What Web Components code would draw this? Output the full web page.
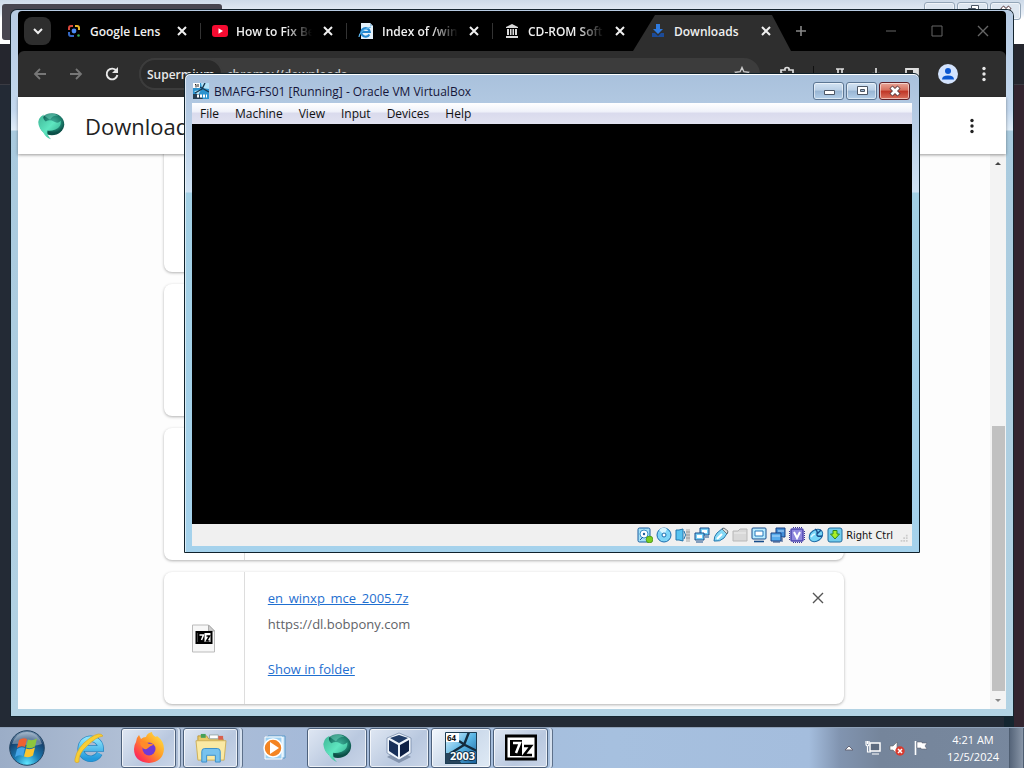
<!DOCTYPE html>
<html lang="en">
<head>
<meta charset="utf-8">
<meta name="viewport" content="width=device-width, initial-scale=1">
<title>Desktop</title>
<style>
  html, body { height: 100%; margin: 0; }
  body { font-family: "Open Sans", "Noto Sans", sans-serif; font-size: 12px; overflow: hidden; }
</style>
</head>
<body>
<desk-top>
  <back-window slot="back"></back-window>
  <browser-window slot="browser"></browser-window>
  <vm-window slot="vm" heading="BMAFG-FS01 [Running] - Oracle VM VirtualBox"></vm-window>
  <task-bar slot="taskbar"></task-bar>
</desk-top>

<script>
const ICONS = {
  chevron: '<path d="M4 6l4 4 4-4" fill="none" stroke="#eee" stroke-width="2"/>',
  close: '<path d="M4 4l8 8M12 4l-8 8" fill="none" stroke="currentColor" stroke-width="2"/>',
  thinclose: '<path d="M3 3l10 10M13 3L3 13" fill="none" stroke="currentColor" stroke-width="1.4"/>',
  min: '<path d="M3 8h10" stroke="currentColor"/>',
  max: '<path d="M3 3h10v10H3z" fill="none" stroke="currentColor"/>',
  plus: '<path d="M8 3v10M3 8h10" stroke="currentColor" stroke-width="1.6"/>',
  lens: '<g fill="none" stroke-width="2"><path d="M3 7V5q0-2 2-2h2" stroke="#d8483c"/><path d="M9 3h2q2 0 2 2v2" stroke="#e8b62a"/><path d="M3 9v2q0 2 2 2h3" stroke="#3569c4"/></g><circle cx="8" cy="8" r="2.4" fill="#4c8bf5"/><circle cx="12.5" cy="12.5" r="1.3" fill="#35a853"/>',
  youtube: '<rect x="0" y="2" width="16" height="12" rx="3" fill="#f60b31"/><path d="M6.5 5.2v5.6L11 8z" fill="#fff"/>',
  iedoc: '<path d="M3 0h9l3 3v13H3z" fill="#e4f1fa"/><path d="M12 0v3h3" fill="#9bc2e0"/><path d="M11.300 11.500A4.300 4.300 0 1 1 11.800 9H4" fill="none" stroke="#2587cf" stroke-width="2.2"/><path d="M1 14Q1 8 13 4" fill="none" stroke="#5db5ec" stroke-width="1.2"/>',
  archive: '<path d="M2 4l6-3 6 3v1H2zM2 13h12v2H2zM3 6h2v6H3zM6 6h1.5v6H6zM8.500 6H10v6H8.500zM11 6h2v6h-2z" fill="#d9d9d9"/>',
  dlblue: '<path d="M6 1h4v5h3l-5 5-5-5h3z" fill="#2f7be0"/><path d="M2 10h3l3 3 3-3h3v4H2z" fill="#1c4b98"/>',
  back: '<path d="M14 8H3M8 3L3 8l5 5" fill="none" stroke="#777" stroke-width="1.8"/>',
  forward: '<path d="M2 8h11M8 3l5 5-5 5" fill="none" stroke="#777" stroke-width="1.8"/>',
  reload: '<path d="M12.6 5A5.4 5.4 0 1 0 13.4 9" fill="none" stroke="#e8e8e8" stroke-width="1.9"/><path d="M14 1v6H8z" fill="#e8e8e8"/>',
  star: '<path d="M8 1.5l1.9 4.2 4.6.5-3.4 3.1.9 4.5-4-2.3-4 2.3.9-4.5-3.400-3.100 4.600-.5z" fill="none" stroke="#ccc" stroke-width="1.4"/>',
  puzzle: '<path d="M2 4h4q-.5-2.500 2-2.500T10 4h4v10H2v-3q2 0 2-2T2 7z" fill="none" stroke="#ddd" stroke-width="1.7"/>',
  pin: '<path d="M4 3h8M6 3v6l-2 2h8l-2-2V3M8 11v4" fill="none" stroke="#ddd" stroke-width="1.7"/>',
  download: '<path d="M8 2v8M4.500 7L8 10.500 11.500 7M3 11v3h10v-3" fill="none" stroke="#ddd" stroke-width="1.7"/>',
  panel: '<path d="M2 3h12v10H2z" fill="none" stroke="#ddd" stroke-width="1.8"/><path d="M9 3h5v10H9z" fill="#ddd"/>',
  avatar: '<circle cx="10" cy="10" r="10" fill="#d3e3fd"/><circle cx="10" cy="7" r="3" fill="#0b57d0"/><path d="M4 15.500q0-4 6-4t6 4z" fill="#0b57d0"/>',
  kebab: '<g fill="currentColor"><circle cx="8" cy="2.500" r="1.700"/><circle cx="8" cy="8" r="1.700"/><circle cx="8" cy="13.500" r="1.700"/></g>',
  supermium: '<defs><radialGradient id="g" cx=".55" cy=".4"><stop offset="0" stop-color="#3fae98"/><stop offset=".7" stop-color="#1d7d6c"/><stop offset="1" stop-color="#0b4f47"/></radialGradient><linearGradient id="h" x2="1" y2="1"><stop offset="0" stop-color="#3fb596"/><stop offset=".5" stop-color="#5ee6c0"/><stop offset="1" stop-color="#2a9c80"/></linearGradient></defs><ellipse cx="18" cy="15" rx="14" ry="12.500" fill="url(#g)"/><path d="M3 16Q1 8 9 4q-2 5 2 8 5-3 9 0 5 3 8-1 1 7-6 10-6 2-9 1-1 5 4 10-6-2-9-8-4-3-5-8z" fill="url(#h)"/><path d="M9 5q8-5 16 0-7 0-9 5-3-2-7-5z" fill="#7be0c8" opacity=".45"/>',
  caretup: '<path d="M2 7l3-3 3 3z" fill="#444"/>',
  caretdown: '<path d="M2 4l3 3 3-3z" fill="#888"/>',
  file7z: '<path d="M1 1h16l6 6v21H1z" fill="#f7f7f7" stroke="#bbb"/><path d="M17 1v6h6z" fill="#ccc" stroke="#aaa"/><path d="M5 8h15v11H5z" fill="#fff" stroke="#000" stroke-width="2"/><path d="M6 9h7v9H6z"/><path d="M8 11h4l-2 5" fill="none" stroke="#fff" stroke-width="1.5"/><path d="M15 12h3l-3 5h3" fill="none" stroke="#000" stroke-width="1.5"/>',
  vm2003: '<defs><linearGradient id="v" x2="1" y2="1"><stop offset="0" stop-color="#e8f8ff"/><stop offset=".5" stop-color="#58b4e4"/><stop offset="1" stop-color="#155b95"/></linearGradient></defs><path d="M0 0h32v32H0z" fill="url(#v)"/><path d="M0 21h9l8 11H0z" fill="#27445c"/><path d="M14 9l6 4 12 6M24 0l-5 13L6 21" stroke="#142b3d" stroke-width="2.400" fill="none"/><path d="M.5.500h31v31H.5z" fill="none" stroke="#1b3c53"/><path d="M1 1h13v9H1z" fill="#fff"/><text x="2" y="9" font-size="8" font-weight="700" font-family="Open Sans" fill="#111">64</text><text x="5" y="28" font-size="11" font-weight="700" font-family="Open Sans" fill="#fff" stroke="#12344d" stroke-width="2" paint-order="stroke">2003</text>',
  vmsmall: '<path d="M0 0h16v16H0z" fill="#2b93cf"/><path d="M0 0h7v5H0z" fill="#fff"/><path d="M8 0h8v6l-7-1zM1 8l7-1-3 5z" fill="#b5e4f8"/><path d="M7 4l9 5M12 0L9 6 2 10" stroke="#16384f" fill="none" stroke-width="1.4"/><path d="M2 1.500h1v3M5 1v3" stroke="#222" fill="none"/><path d="M0 11h6l4 5H0z" fill="#263d52"/><path d="M4 13h10" stroke="#fff" stroke-width="3" stroke-dasharray="2 1"/>',
  orb: '<defs><radialGradient id="o" cx=".5" cy=".95" r=".9"><stop offset="0" stop-color="#5fe6ff"/><stop offset=".4" stop-color="#1b7db5"/><stop offset=".8" stop-color="#16406c"/><stop offset="1" stop-color="#6f8eac"/></radialGradient></defs><circle cx="18" cy="18" r="17.300" fill="url(#o)" stroke="#234462"/><path d="M3 14Q7 2 18 2t15 12q-8 3-15 1-8-2-15-1z" fill="#fff" opacity=".35"/><path d="M10 10q4-3 8-1l-2 8q-4-2-8 1z" fill="#ee6132"/><path d="M19 9.500q4 2 9-1l-2 8q-4 3-9 1z" fill="#8cc63e"/><path d="M8 19q4-3 8-1l-2 8q-4-2-8 1z" fill="#45a5e8"/><path d="M17 18.500q4 2 9-1l-2 8q-4 3-9 1z" fill="#fcc52d"/>',
  ie: '<defs><linearGradient id="e" x2="0" y2="1"><stop offset="0" stop-color="#8be3fb"/><stop offset="1" stop-color="#2299dc"/></linearGradient></defs><path d="M26.500 21.500a10 10 0 1 1 1.200-5H10" fill="none" stroke="#2586c2" stroke-width="6.500"/><path d="M26.500 21.500a10 10 0 1 1 1.200-5H10" fill="none" stroke="url(#e)" stroke-width="5"/><path d="M30 4Q27-1 17 6 4 15 2 27q-1 5 4 3-1-8 8-16Q23 5 30 4z" fill="#f7ce35" stroke="#d9a51c" stroke-width=".6"/>',
  firefox: '<defs><linearGradient id="f" x1="1" x2="0" y2="1"><stop offset="0" stop-color="#fff04a"/><stop offset=".45" stop-color="#ff9a26"/><stop offset=".8" stop-color="#ff3750"/><stop offset="1" stop-color="#e31587"/></linearGradient></defs><path d="M3 10q0-4 3-7l2 4q2-2 5-2 1-4 6-5 0 3 4 5l1-1q7 5 7 13-1 13-15 14Q1 30 1 17q0-4 2-7z" fill="url(#f)"/><circle cx="16" cy="17" r="6.500" fill="#7139d6"/><path d="M7 10q5-2 9 2 4-1 4 1-3 1-5 3-3 3-6-1-2-2-2-5z" fill="#ff8b2a"/>',
  explorer: '<path d="M3 4h9l2 3h15v20H3z" fill="#e9c966" stroke="#bf9a3e"/><path d="M6 2h5v4H6z" fill="#45a057"/><path d="M15 3h9v4h-9z" fill="#fff" stroke="#9aa"/><path d="M24 4h5v4h-5z" fill="#d8604e"/><path d="M1 9h31l-2 20H3z" fill="#fae9a4" stroke="#cdb05a"/><path d="M7 31V20q0-3 3-3h13q3 0 3 3v11h-5v-7h-9v7z" fill="#77c2ee" stroke="#3a8fcb"/>',
  wmp: '<path d="M11 4h17v22H11z" fill="#d6ecfb" stroke="#5797c8"/><path d="M8 5h17v22H8z" fill="#9dd0f2" stroke="#fff"/><circle cx="16" cy="16" r="9" fill="#f48422" stroke="#fff" stroke-width="1.5"/><path d="M13 10v12l9-6z" fill="#fff"/>',
  vbox: '<path d="M4 25l12 6 12-6-12-7z" fill="#6c7e98" opacity=".7"/><path d="M16 1l12 5v15l-12 7-12-7V6z" fill="#eef4fb" stroke="#6d83a3" stroke-width=".7"/><path d="M16 3l9 3-9 5-9-5z" fill="#1f3b66"/><path d="M6 8l9 5v12l-9-6z" fill="#18305a"/><path d="M26 8l-9 5v12l9-6z" fill="#0c1f44"/>',
  seven: '<path d="M1 1h30v23H1z" fill="#fff" stroke="#000" stroke-width="3"/><path d="M5 5h12v16H5z"/><path d="M8 8h7l-4 10" fill="none" stroke="#fff" stroke-width="2.5"/><path d="M19 11h7l-7 9h8" fill="none" stroke="#000" stroke-width="2.5"/>',
  hdd: '<rect x="1" y="1" width="12" height="14" rx="1.500" fill="#a5e0f8" stroke="#1a5fa0"/><circle cx="7" cy="7" r="4" fill="#fff" stroke="#3b91c8"/><circle cx="7" cy="7" r="1.200" fill="#1a5fa0"/><path d="M3 13l3-3" stroke="#1a5fa0"/><circle cx="12.500" cy="12.500" r="3.400" fill="#7cce1e" stroke="#3e8814" stroke-width=".7"/>',
  disc: '<circle cx="8" cy="8" r="7" fill="#7ed5f7" stroke="#1a6dae"/><path d="M8 8L3 3q4-4 8-1z" fill="#d7f5ff"/><circle cx="8" cy="8" r="2" fill="#fff" stroke="#1a6dae"/>',
  audio: '<path d="M1 3h3l4-1v12l-4-1H1z" fill="#58c3f0" stroke="#2074ac"/><path d="M9 4q3 4 0 8" fill="none" stroke="#2074ac"/><path d="M11 2h4v13h-4z" fill="#ccc"/><path d="M11 5h4M11 8h4M11 11h4" stroke="#999"/>',
  net: '<path d="M6 1h9v7H6z" fill="#78cff5" stroke="#174d8b"/><path d="M8 3h5v3H8z" fill="#fff"/><path d="M1 6h9v7H1z" fill="#78cff5" stroke="#174d8b"/><path d="M3 8h5v3H3z" fill="#fff"/><path d="M2 15h7M11 10h4" stroke="#174d8b"/>',
  usb: '<path d="M1 14q0-5 3-8l6-5 5 4-4 6q-4 4-10 3z" fill="#84d9f6" stroke="#2676ad"/><path d="M9 2l5 5 1-3-4-3z" fill="#ddd" stroke="#555" stroke-width=".7"/><path d="M4 12l5-5" stroke="#fff" stroke-width="2"/>',
  folder: '<path d="M1 4h5l2-2h7v12H1z" fill="#d8d8d8" stroke="#b8b8b8"/><path d="M2 6h12" stroke="#eee"/>',
  display: '<rect x="1" y="1" width="14" height="11" rx="1" fill="#b8ebff" stroke="#174d8b"/><path d="M4 4h8v5H4z" fill="#fff" stroke="#2576b9"/><path d="M3 14.500h10" stroke="#174d8b" stroke-width="1.6"/>',
  record: '<path d="M6 1h9v9H6z" fill="#438fd8" stroke="#183f80"/><path d="M1 6h10v8H1z" fill="#58aced" stroke="#183f80"/><path d="M2 9h8M8 4h6" stroke="#b7dbfb"/><path d="M12 11v4M3 15h7" stroke="#183f80"/>',
  cpu: '<rect x="2" y="2" width="12" height="12" rx="1" fill="#8f88dd" stroke="#4d45b0" stroke-width="1.5"/><path d="M4 .5h9M4 15.500h9M.5 4v9M15.500 4v9" stroke="#3b3499" stroke-dasharray="1 1"/><path d="M5 5l3 6 3-6" fill="none" stroke="#fff" stroke-width="2"/>',
  mouse: '<ellipse cx="8" cy="8.500" rx="7.300" ry="5.500" transform="rotate(-35 8 8.500)" fill="#76d5f7" stroke="#1c6aa5"/><path d="M7 2q3 2 2 5t5 2M9 7l4-4" fill="none" stroke="#174d8b" stroke-width="1.400"/><path d="M3 10q2-3 4-3" stroke="#d9f6ff" fill="none" stroke-width="1.500"/>',
  keyboard: '<rect x="1" y="1" width="14" height="14" rx="2" fill="#71cced" stroke="#236d9e"/><path d="M6 3.500h4V7h2.500L8 12 3.500 7H6z" fill="#a9ee27" stroke="#2c8b25"/>',
  grip: '<path d="M9 3h2v2H9zM6 6h2v2H6zM9 6h2v2H9zM3 9h2v2H3zM6 9h2v2H6zM9 9h2v2H9z" fill="#ccc"/>',
  wmin: '<path d="M3.500 7.500h10v4h-10z" fill="#fff" stroke="#4c5665"/>',
  wmax: '<path d="M3.500 3.500h10v8h-10z" fill="#fff" stroke="#4c5665"/><path d="M6.500 6.500h4v2h-4z" fill="#9fb7d1" stroke="#4c5665"/>',
  wrestore: '<path d="M6.500 2.500h7v6h-7zM3.500 5.500h7v6h-7z" fill="#fff" stroke="#4c5665"/>',
  wclose: '<path d="M4 4l8 8M12 4l-8 8" stroke="#583b40" stroke-width="4.5"/><path d="M4.500 4.500l7 7M11.500 4.500l-7 7" stroke="#fff" stroke-width="2.8"/>',
  trayup: '<path d="M4 10l4-4 4 4z" fill="#fff" stroke="#667"/>',
  traynet: '<path d="M5 3h10v8H5z" fill="#5d6b7f" stroke="#fff" stroke-width="1.5"/><path d="M7 14h7M1 1v3q0 2 1.500 2T4 4V1M2.500 1v3M2.500 6v6H6" fill="none" stroke="#fff" stroke-width="1.2"/>',
  volume: '<path d="M1 6h3l4-4v12l-4-4H1z" fill="#fff" stroke="#666" stroke-width=".6"/><circle cx="11" cy="11" r="4.700" fill="#d83b30"/><path d="M9 9l4 4M13 9l-4 4" stroke="#fff" stroke-width="1.5"/>',
  flag: '<path d="M2.500 1v14" stroke="#fff" stroke-width="1.6"/><path d="M4 2h5v1h5l-2 3 2 3H8V8H4z" fill="#fff" stroke="#556" stroke-width=".5"/>'
};

const BOXES = {
  avatar: "0 0 20 20", supermium: "0 0 34 34", caretup: "0 0 10 10", caretdown: "0 0 10 10",
  file7z: "0 0 24 29", vm2003: "0 0 32 32", orb: "0 0 36 36", ie: "0 0 32 32", firefox: "0 0 32 32",
  explorer: "0 0 33 33", wmp: "0 0 32 32", vbox: "0 0 32 32", seven: "0 -3 32 32"
};

class UiIcon extends HTMLElement {
  constructor() {
    super();
    this.attachShadow({mode: "open"});
  }

  connectedCallback() {
    const name = this.getAttribute("name");
    const size = this.getAttribute("size") || 16;
    this.shadowRoot.innerHTML = `
      <style>
        :host { display: inline-block; flex: none; width: ${size}px; height: ${size}px; }
        svg { display: block; width: 100%; height: 100%; }
      </style>
      <svg viewBox="${BOXES[name] || "0 0 16 16"}" aria-hidden="true">${ICONS[name]}</svg>
    `;
  }
}

// The windows lie freely on the desktop, the task bar closes it at the bottom
class DeskTop extends HTMLElement {
  constructor() {
    super();
    this.attachShadow({mode: "open"}).innerHTML = `
      <style>
        :host { display: flex; flex-direction: column; height: 100vh; background: #25262e; }
        main { flex: 1; position: relative; min-height: 0; }
        .browser, .vm, .back { position: absolute; isolation: isolate; }
        .back { inset: 0; }
        .browser { inset: 10px 11px 11px 11px; }
        .vm { left: 184px; right: 104px; top: 73px; }
        ::slotted(*) { height: 100%; }
      </style>
      <main>
        <div class="back"><slot name="back"></slot></div>
        <div class="browser"><slot name="browser"></slot></div>
        <div class="vm"><slot name="vm"></slot></div>
      </main>
      <footer><slot name="taskbar"></slot></footer>
    `;
  }
}

class CaptionButtons extends HTMLElement {
  constructor() {
    super();
    this.attachShadow({mode: "open"});
  }

  connectedCallback() {
    const quiet = this.hasAttribute("quiet");
    this.shadowRoot.innerHTML = `
      <style>
        :host { display: flex; gap: 2px; }
        button {
          display: flex; align-items: center; justify-content: center;
          width: 31px; height: 18px; padding: 0; border: 1px solid #5c7693; border-radius: 3px;
          background: linear-gradient(#d3e3f3, #b9cfe6 45%, #98b5d3 50%, #b4d0ea);
          box-shadow: inset 0 0 0 1px #ffffff88;
        }
        .close { border-color: #5f2027; background: linear-gradient(#e9a698, #d6705e 45%, #bf3425 50%, #d9705d); }
        :host([quiet]) button { border-color: #93a5b7; background: #dde6f0; }
      </style>
      <button aria-label="Minimize"><ui-icon name="wmin"></ui-icon></button>
      <button aria-label="Maximize"><ui-icon name="${quiet ? "wrestore" : "wmax"}"></ui-icon></button>
      <button class="close" aria-label="Close"><ui-icon name="wclose"></ui-icon></button>
    `;
  }
}

class BackWindow extends HTMLElement {
  constructor() {
    super();
    this.attachShadow({mode: "open"}).innerHTML = `
      <style>
        :host { display: flex; flex-direction: column; background: #25262e; }
        .top {
          display: flex; justify-content: space-between; align-items: flex-start;
          height: 44px; background: linear-gradient(#cddae8, #e8eff7 14px, #fff 18px);
        }
        .tab { width: 220px; height: 36px; margin: 4px 0 0 2px; border-radius: 3px; background: #484650; }
        caption-buttons { margin: 2px 3px 0 0; }
        .bar { height: 40px; border-bottom: 1px solid #3a3b43; }
        .page { flex: 1; background: linear-gradient(90deg, #232a35 98%, #14252f 98%, #14252f 99%, #33242f 99%); }
      </style>
      <div class="top"><div class="tab"></div><caption-buttons quiet></caption-buttons></div>
      <div class="bar"></div>
      <div class="page"></div>
    `;
  }
}

class BrowserTab extends HTMLElement {
  constructor() {
    super();
    this.attachShadow({mode: "open"});
  }

  connectedCallback() {
    this.shadowRoot.innerHTML = `
      <style>
        :host {
          display: flex; align-items: center; gap: 8px; box-sizing: border-box; min-width: 0;
          flex: 0 1 146px; height: 36px; padding: 0 11px 4px; color: #f0f0f0; font-weight: 600;
          background: linear-gradient(#333, #333) right 8px / 1px 16px no-repeat;
        }
        :host([active]) {
          margin: 0 -6px; padding: 0 17px 4px; flex-basis: 158px;
          background: #2e2e2e; clip-path: polygon(22px 0, 139px 0, 100% 100%, 0 100%);
        }
        :host([last]) { background: none; }
        .title { flex: 1; overflow: hidden; white-space: nowrap; }
        .title.fade { -webkit-mask-image: linear-gradient(90deg, #000 65%, transparent); mask-image: linear-gradient(90deg, #000 65%, transparent); }
        button { display: flex; padding: 0; border: 0; background: none; color: #f0f0f0; }
      </style>
      <ui-icon name="${this.getAttribute("icon")}"></ui-icon>
      <span class="title ${this.hasAttribute("fade") ? "fade" : ""}"><slot></slot></span>
      <button aria-label="Close tab"><ui-icon name="close"></ui-icon></button>
    `;
  }
}

class BrowserToolbar extends HTMLElement {
  constructor() {
    super();
    this.attachShadow({mode: "open"}).innerHTML = `
      <style>
        :host {
          display: flex; align-items: center; height: 46px; padding: 0 4px;
          background: #2e2e2e; border-radius: 6px 6px 0 0; color: #e8e8e8;
        }
        button {
          display: flex; align-items: center; justify-content: center; flex: none;
          width: 36px; height: 32px; padding: 0; border: 0; background: none; color: inherit; font: inherit;
        }
        .box {
          display: flex; align-items: center; flex: 1; min-width: 0; height: 32px;
          margin: 0 9px; border-radius: 16px; background: #3c3c3c;
        }
        .box .chip { width: auto; padding: 0 6px; border-radius: 16px; background: #2a2a2a; border: 2px solid #3c3c3c; font-weight: 600; }
        input { flex: 1; min-width: 0; padding: 0 4px; border: 0; background: none; color: #c8c8c8; font: inherit; font-weight: 600; }
        i { width: 1px; height: 16px; margin: 0 8px; background: #111; }
      </style>
      <button aria-label="Back"><ui-icon name="back"></ui-icon></button>
      <button aria-label="Forward"><ui-icon name="forward"></ui-icon></button>
      <button aria-label="Reload"><ui-icon name="reload"></ui-icon></button>
      <div class="box">
        <button class="chip">Supermium</button>
        <input aria-label="Address" value="chrome://downloads">
        <button aria-label="Bookmark"><ui-icon name="star"></ui-icon></button>
      </div>
      <button aria-label="Extensions"><ui-icon name="puzzle"></ui-icon></button>
      <i></i>
      <button aria-label="Pin"><ui-icon name="pin"></ui-icon></button>
      <button aria-label="Downloads"><ui-icon name="download"></ui-icon></button>
      <button aria-label="Side panel"><ui-icon name="panel"></ui-icon></button>
      <button aria-label="Profile"><ui-icon name="avatar" size="20"></ui-icon></button>
      <button aria-label="Menu"><ui-icon name="kebab"></ui-icon></button>
    `;
  }
}

class DownloadCard extends HTMLElement {
  constructor() {
    super();
    this.attachShadow({mode: "open"});
  }

  connectedCallback() {
    const file = this.getAttribute("file");
    this.shadowRoot.innerHTML = `
      <style>
        :host {
          display: flex; flex: none; height: 132px; border-radius: 8px; background: #fff;
          box-shadow: 0 1px 3px #0000004d; font-size: 13px;
        }
        .icon { display: flex; align-items: center; justify-content: center; width: 80px; border-right: 1px solid #ddd; }
        .text { flex: 1; display: flex; flex-direction: column; align-items: flex-start; padding: 15px 23px; line-height: 22px; }
        a { color: #1f6fd0; }
        .name { font-weight: 500; }
        .url { margin: 4px 0 23px; color: #5f6368; }
        button { align-self: flex-start; display: flex; margin: 18px 18px 0 0; padding: 0; border: 0; background: none; color: #555; }
      </style>
      <div class="icon">${file ? '<ui-icon name="file7z" size="29"></ui-icon>' : ""}</div>
      ${file ? `
      <div class="text">
        <a class="name" href="#">${file}</a>
        <span class="url">${this.getAttribute("url")}</span>
        <a href="#">Show in folder</a>
      </div>
      <button aria-label="Remove"><ui-icon name="thinclose"></ui-icon></button>` : ""}
    `;
  }
}

class ScrollTrack extends HTMLElement {
  constructor() {
    super();
    this.attachShadow({mode: "open"}).innerHTML = `
      <style>
        :host { display: flex; flex-direction: column; align-items: center; width: 16px; background: #f3f3f3; }
        ui-icon { margin: 4px 0; }
        .track { flex: 1; display: flex; align-items: flex-end; }
        .thumb { width: 13px; height: 51%; background: #c1c1c1; }
      </style>
      <ui-icon name="caretup" size="10"></ui-icon>
      <div class="track"><div class="thumb"></div></div>
      <ui-icon name="caretdown" size="10"></ui-icon>
    `;
  }
}

class BrowserWindow extends HTMLElement {
  constructor() {
    super();
    this.attachShadow({mode: "open"}).innerHTML = `
      <style>
        :host {
          display: flex; flex-direction: column; box-sizing: border-box; padding: 1px 7px 7px;
          border-radius: 6px 6px 0 0; box-shadow: 0 0 0 1px #15252f;
          background: linear-gradient(#b7cbe3, #c3d8ee 100px, #e0edf8 120px, #a9cade 121px, #b3d3e4);
        }
        .strip { display: flex; align-items: flex-end; height: 40px; background: #000; border-radius: 4px 4px 0 0; }
        .search {
          display: flex; align-items: center; justify-content: center; flex: none;
          width: 27px; height: 28px; margin: 0 4px 6px 6px; padding: 0; border: 0; border-radius: 8px; background: #2e2e2e;
        }
        .plain { display: flex; justify-content: center; align-items: center; width: 46px; height: 36px; padding: 0 0 4px; border: 0; background: none; color: #666; }
        .new { width: 32px; color: #888; }
        .space { flex: 1; }
        .under { background: #000; }
        header {
          display: flex; align-items: center; height: 57px; padding: 0 26px 0 18px; background: #fff;
          box-shadow: 0 1px 3px #00000066; z-index: 1;
        }
        h1 { flex: 1; margin: 0 0 0 19px; font-size: 22px; font-weight: 400; color: #222; }
        header button { display: flex; padding: 0; border: 0; background: none; color: #222; }
        .view { flex: 1; display: flex; min-height: 0; background: #fdfdfd; }
        .list {
          flex: 1; display: flex; flex-direction: column; justify-content: flex-end; align-items: center;
          gap: 12px; padding-bottom: 5px; overflow: hidden;
        }
        download-card { width: 70%; }
      </style>
      <div class="strip">
        <button class="search" aria-label="Search tabs"><ui-icon name="chevron"></ui-icon></button>
        <browser-tab icon="lens">Google Lens</browser-tab>
        <browser-tab icon="youtube" fade>How to Fix Be</browser-tab>
        <browser-tab icon="iedoc" fade>Index of /win</browser-tab>
        <browser-tab icon="archive" fade last>CD-ROM Soft</browser-tab>
        <browser-tab icon="dlblue" active>Downloads</browser-tab>
        <button class="plain new" aria-label="New tab"><ui-icon name="plus"></ui-icon></button>
        <span class="space"></span>
        <button class="plain" aria-label="Minimize"><ui-icon name="min"></ui-icon></button>
        <button class="plain" aria-label="Maximize"><ui-icon name="max"></ui-icon></button>
        <button class="plain" aria-label="Close"><ui-icon name="thinclose"></ui-icon></button>
      </div>
      <div class="under"><browser-toolbar></browser-toolbar></div>
      <header>
        <ui-icon name="supermium" size="30"></ui-icon>
        <h1>Downloads</h1>
        <button aria-label="More actions"><ui-icon name="kebab"></ui-icon></button>
      </header>
      <div class="view">
        <div class="list">
          <download-card></download-card>
          <download-card></download-card>
          <download-card></download-card>
          <download-card file="en_winxp_mce_2005.7z" url="https://dl.bobpony.com"></download-card>
        </div>
        <scroll-track></scroll-track>
      </div>
    `;
  }
}

class VmWindow extends HTMLElement {
  constructor() {
    super();
    this.attachShadow({mode: "open"});
  }

  connectedCallback() {
    const menus = ["File", "Machine", "View", "Input", "Devices", "Help"];
    const lights = ["hdd", "disc", "audio", "net", "usb", "folder", "display", "record", "cpu", "mouse", "keyboard"];
    this.shadowRoot.innerHTML = `
      <style>
        :host {
          display: block; box-sizing: border-box; border: 1px solid #10222c; border-radius: 6px 6px 0 0; padding: 0 7px 6px;
          background: linear-gradient(#a9c1dc, #b7cde5 50px, #cfe2f3 118px, #a2cfe4 119px, #a5d2ec);
          box-shadow: inset 0 1px 0 #fff, inset 1px 0 0 #ffffff99;
        }
        .title { display: flex; align-items: center; height: 29px; padding: 4px 2px 0 1px; gap: 5px; box-sizing: border-box; color: #15153a; }
        .title span { flex: 1; white-space: nowrap; overflow: hidden; padding-top: 1px; }
        nav { display: flex; gap: 16px; height: 21px; padding: 0 8px; background: linear-gradient(#fff, #f0f2fa 40%, #dadbed 50%, #e1e2f0); }
        nav button { padding: 0; border: 0; background: none; font: inherit; color: #111; }
        .screen { height: 400px; background: #000; }
        .status {
          display: flex; align-items: center; justify-content: flex-end; gap: 3px; height: 22px; background: #f0f0f0;
          font: 11px "DejaVu Sans Condensed", "DejaVu Sans", sans-serif; color: #111;
        }
        .status ui-icon:last-child { align-self: flex-end; margin-left: 2px; }
      </style>
      <div class="title">
        <ui-icon name="vmsmall"></ui-icon>
        <span>${this.getAttribute("heading")}</span>
        <caption-buttons></caption-buttons>
      </div>
      <nav>${menus.map(m => `<button>${m}</button>`).join("")}</nav>
      <div class="screen"></div>
      <div class="status">
        ${lights.map(l => `<ui-icon name="${l}"></ui-icon>`).join("")}
        <span>Right Ctrl</span>
        <ui-icon name="grip" size="14"></ui-icon>
      </div>
    `;
  }
}

class TaskItem extends HTMLElement {
  constructor() {
    super();
    this.attachShadow({mode: "open"});
  }

  connectedCallback() {
    this.shadowRoot.innerHTML = `
      <style>
        :host { display: block; width: 60px; }
        button {
          display: flex; align-items: center; justify-content: center; box-sizing: border-box;
          width: 100%; height: 40px; padding: 0; border: 1px solid transparent; border-radius: 3px; background: none;
        }
        :host([open]) button {
          border-color: #4d617c; box-shadow: inset 0 0 0 1px #ffffffb0;
          background: linear-gradient(135deg, #dfe7f3, #b9c8df 60%, #c9d5e8);
        }
        :host([group]) { display: flex; box-sizing: border-box; }
        :host([group][open]) { border-right: 1px solid #5d708a; padding-right: 4px; border-radius: 3px; box-shadow: inset -2px 0 0 #d6e1ef; }
        :host([group]:not([open])) { padding-right: 5px; }
        :host([active]) button { background: linear-gradient(135deg, #f3f8fd, #ccdaeb 50%, #dfeaf5); }
      </style>
      <button aria-label="${this.getAttribute("label")}"><ui-icon name="${this.getAttribute("icon")}" size="32"></ui-icon></button>
    `;
  }
}

class TaskBar extends HTMLElement {
  constructor() {
    super();
    this.attachShadow({mode: "open"}).innerHTML = `
      <style>
        :host {
          display: flex; align-items: stretch; box-sizing: border-box; height: 40px; border-top: 1px solid #8fa1b8;
          background: linear-gradient(90deg, #9badc7, #b0bfd5 12%, #a5bad9 30%, #a6c0df 60%, #a4bddd 79%, #8194b0 82%, #75859b 86%, #78889e);
        }
        .start { display: flex; align-items: center; justify-content: center; width: 54px; padding: 0; border: 0; background: none; }
        .items { flex: 1; display: flex; gap: 2px; padding-left: 5px; }
        .tray { display: flex; align-items: center; gap: 8px; color: #fff; }
        .clock { width: 72px; text-align: center; line-height: 17px; font-size: 11px; }
        .show { width: 15px; padding: 0; border: 1px solid #4e5d70; border-width: 0 1px; background: linear-gradient(90deg, #56657a, #8996a8); }
      </style>
      <button class="start" aria-label="Start"><ui-icon name="orb" size="36"></ui-icon></button>
      <div class="items">
        <task-item icon="ie" label="Internet Explorer"></task-item>
        <task-item icon="firefox" label="Firefox" open group></task-item>
        <task-item icon="explorer" label="Explorer" open group></task-item>
        <task-item icon="wmp" label="Media Player" group></task-item>
        <task-item icon="supermium" label="Supermium" open></task-item>
        <task-item icon="vbox" label="VirtualBox" open></task-item>
        <task-item icon="vm2003" label="BMAFG-FS01" open active></task-item>
        <task-item icon="seven" label="7-Zip" open group></task-item>
      </div>
      <div class="tray">
        <ui-icon name="trayup"></ui-icon>
        <ui-icon name="traynet"></ui-icon>
        <ui-icon name="volume"></ui-icon>
        <ui-icon name="flag"></ui-icon>
        <div class="clock">4:21 AM<br>12/5/2024</div>
      </div>
      <button class="show" aria-label="Show desktop"></button>
    `;
  }
}

customElements.define("ui-icon", UiIcon);
customElements.define("caption-buttons", CaptionButtons);
customElements.define("back-window", BackWindow);
customElements.define("browser-tab", BrowserTab);
customElements.define("browser-toolbar", BrowserToolbar);
customElements.define("download-card", DownloadCard);
customElements.define("scroll-track", ScrollTrack);
customElements.define("browser-window", BrowserWindow);
customElements.define("vm-window", VmWindow);
customElements.define("task-item", TaskItem);
customElements.define("task-bar", TaskBar);
customElements.define("desk-top", DeskTop);
</script>
</body>
</html>
